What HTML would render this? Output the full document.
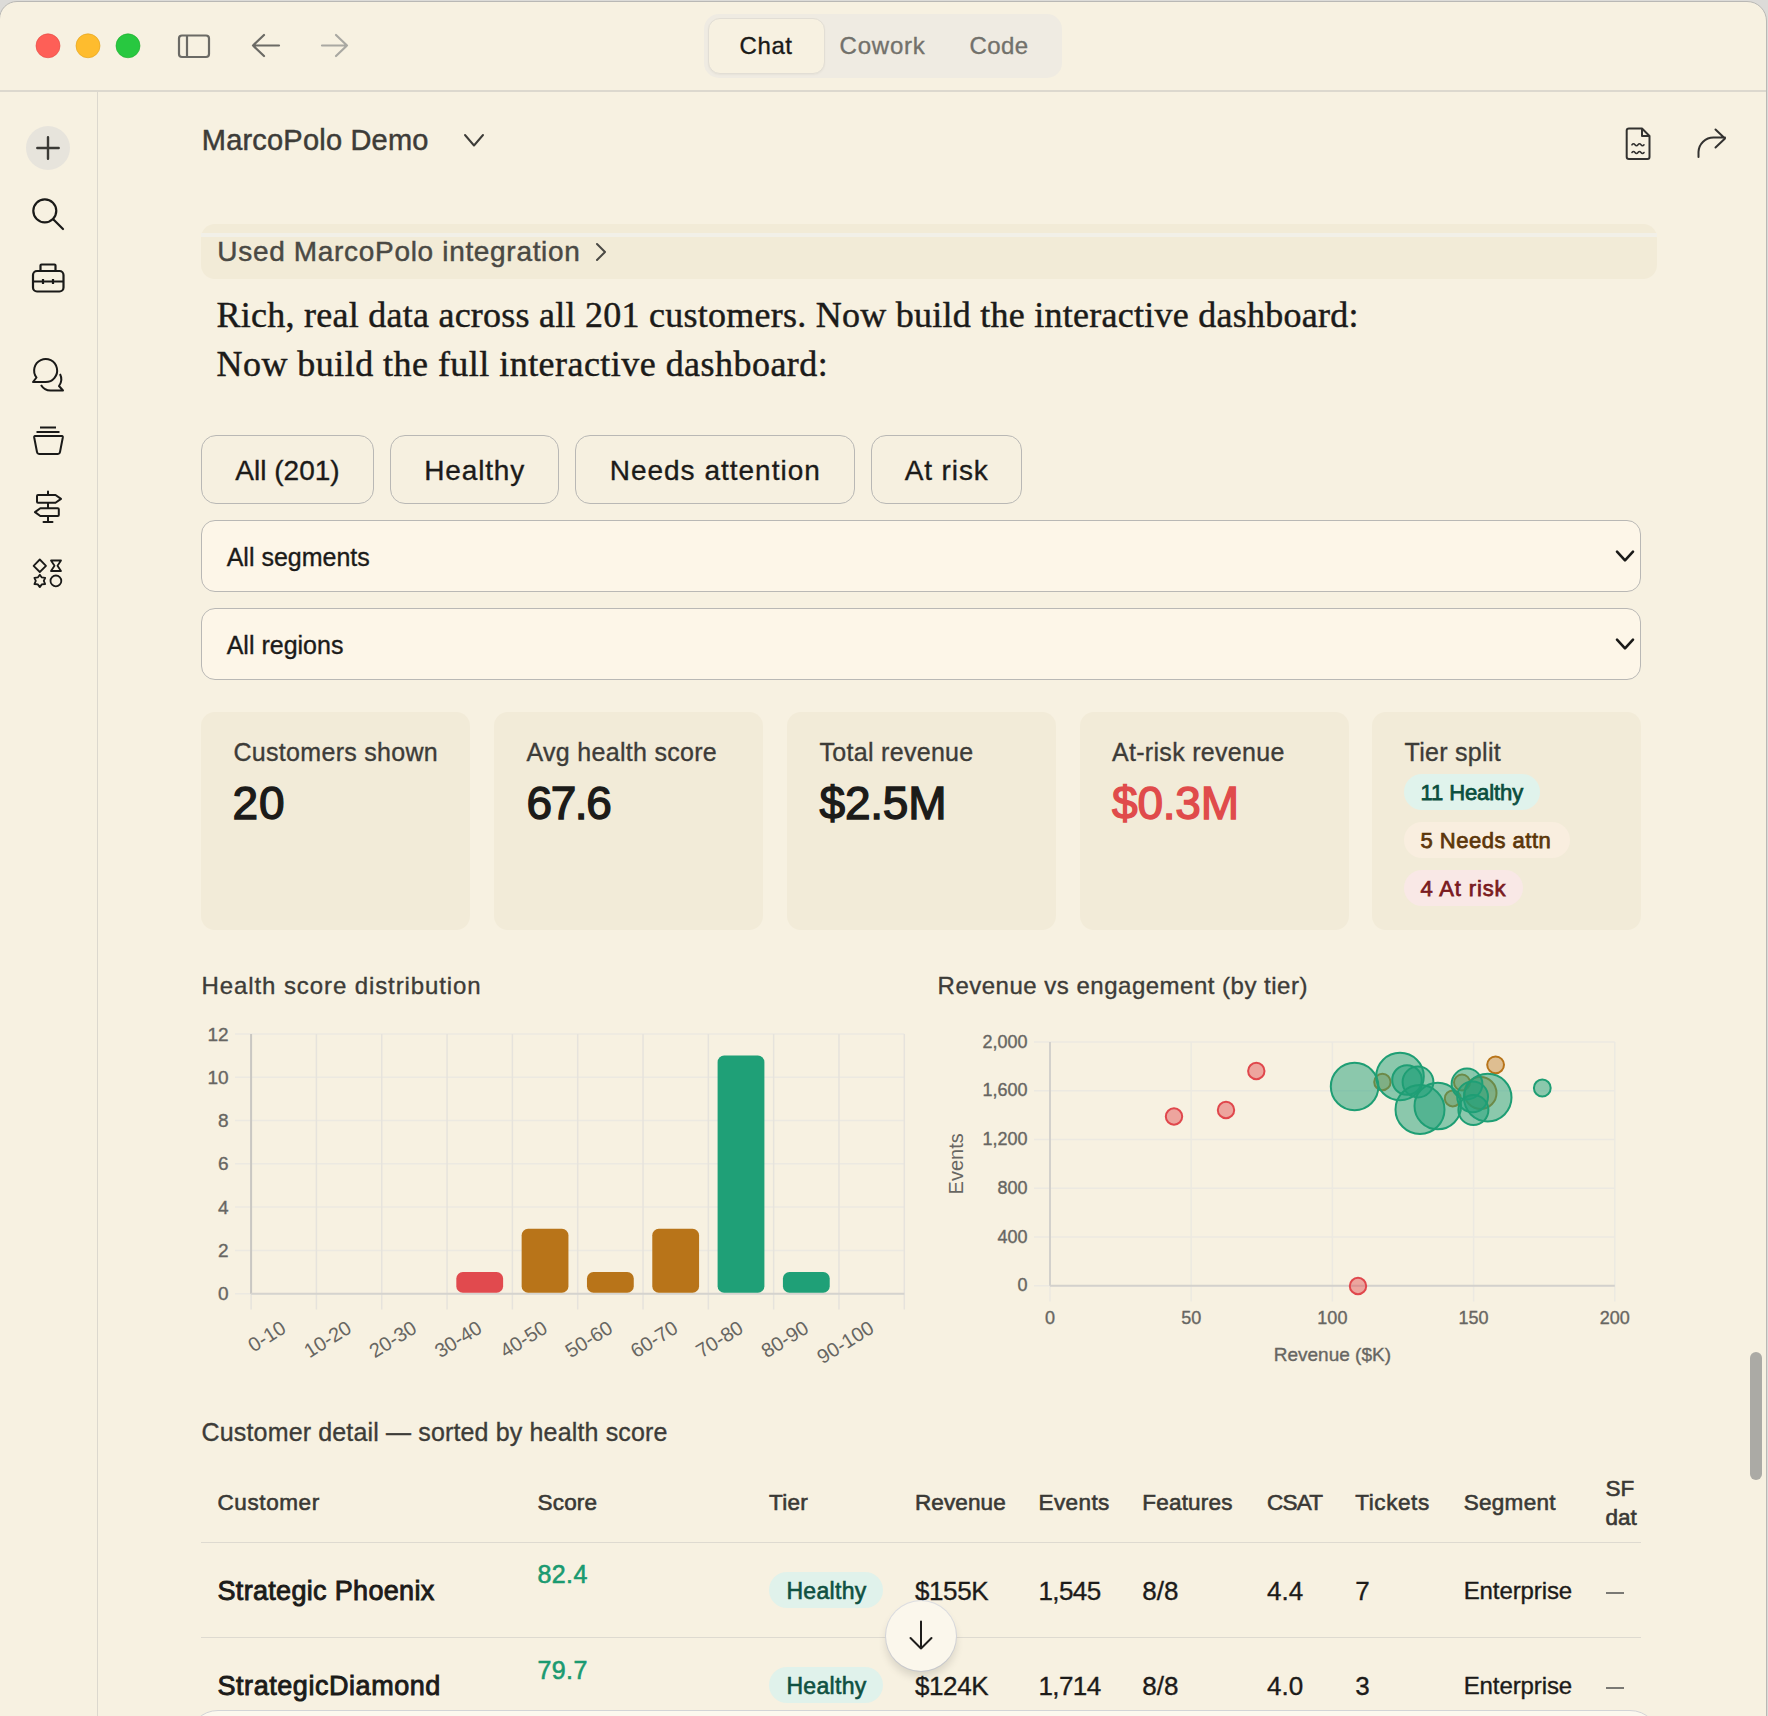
<!DOCTYPE html>
<html><head><meta charset="utf-8"><style>
html,body{margin:0;padding:0;}
body{width:1768px;height:1716px;overflow:hidden;position:relative;background:#DCDBD8;font-family:'Liberation Sans', sans-serif;}
</style></head><body>
<div style="position:absolute;left:-1px;top:0.5px;width:1768px;height:1720px;box-sizing:border-box;background:#F7F1E1;border-radius:18px 20px 0 0;border:1px solid #B9B8B5;"></div>
<div style="position:absolute;left:0px;top:90px;width:1766px;height:2px;box-sizing:border-box;background:#DCD8CE;"></div>
<div style="position:absolute;left:97px;top:92px;width:1px;height:1624px;box-sizing:border-box;background:#DCD8CE;"></div>
<div style="position:absolute;left:704px;top:14px;width:358px;height:64px;box-sizing:border-box;background:#EFEBE2;border-radius:15px;"></div>
<div style="position:absolute;left:708px;top:18px;width:117px;height:56px;box-sizing:border-box;background:#F7F1E1;border-radius:12px;border:1px solid #E2DED5;box-shadow:0 1px 2px rgba(0,0,0,0.04);"></div>
<div style="position:absolute;left:739.50px;top:30.18px;font:400 24px/31px 'Liberation Sans', sans-serif;color:#1A1A18;white-space:nowrap;letter-spacing:0.6px;-webkit-text-stroke:0.35px #1A1A18;">Chat</div>
<div style="position:absolute;left:839.50px;top:30.18px;font:400 24px/31px 'Liberation Sans', sans-serif;color:#72716B;white-space:nowrap;letter-spacing:0.8px;-webkit-text-stroke:0.35px #72716B;">Cowork</div>
<div style="position:absolute;left:969.50px;top:30.18px;font:400 24px/31px 'Liberation Sans', sans-serif;color:#72716B;white-space:nowrap;letter-spacing:0.4px;-webkit-text-stroke:0.35px #72716B;">Code</div>
<div style="position:absolute;left:201.80px;top:121.25px;font:400 29px/38px 'Liberation Sans', sans-serif;color:#3D3C38;white-space:nowrap;letter-spacing:0.2px;-webkit-text-stroke:0.5px #3D3C38;">MarcoPolo Demo</div>
<div style="position:absolute;left:201px;top:224px;width:1456px;height:55px;box-sizing:border-box;background:#F2EBD7;border-radius:14px;"></div>
<div style="position:absolute;left:201px;top:233px;width:1455.5px;height:4px;box-sizing:border-box;background:#F2F0E8;"></div>
<div style="position:absolute;left:217.30px;top:234.30px;font:400 28px/36px 'Liberation Sans', sans-serif;color:#4A4944;white-space:nowrap;letter-spacing:0.68px;-webkit-text-stroke:0.45px #4A4944;">Used MarcoPolo integration</div>
<div style="position:absolute;left:216.50px;top:292.35px;font:400 36px/47px 'Liberation Serif', serif;color:#1C1B19;white-space:nowrap;letter-spacing:0.25px;-webkit-text-stroke:0.45px #1C1B19;">Rich, real data across all 201 customers. Now build the interactive dashboard:</div>
<div style="position:absolute;left:216.50px;top:340.85px;font:400 36px/47px 'Liberation Serif', serif;color:#1C1B19;white-space:nowrap;letter-spacing:0.46px;-webkit-text-stroke:0.45px #1C1B19;">Now build the full interactive dashboard:</div>
<div style="position:absolute;left:201px;top:435px;width:173px;height:68.5px;box-sizing:border-box;border:1.3px solid #B9B8B5;border-radius:15px;background:#F6F0E0;"></div>
<div style="position:absolute;left:-112.50px;width:800px;text-align:center;top:452.80px;font:400 28px/36px 'Liberation Sans', sans-serif;color:#1C1B19;white-space:nowrap;-webkit-text-stroke:0.35px #1C1B19;">All (201)</div>
<div style="position:absolute;left:390px;top:435px;width:168.5px;height:68.5px;box-sizing:border-box;border:1.3px solid #B9B8B5;border-radius:15px;background:#F6F0E0;"></div>
<div style="position:absolute;left:74.68px;width:800px;text-align:center;top:452.80px;font:400 28px/36px 'Liberation Sans', sans-serif;color:#1C1B19;white-space:nowrap;letter-spacing:0.85px;-webkit-text-stroke:0.35px #1C1B19;">Healthy</div>
<div style="position:absolute;left:575px;top:435px;width:279.5px;height:68.5px;box-sizing:border-box;border:1.3px solid #B9B8B5;border-radius:15px;background:#F6F0E0;"></div>
<div style="position:absolute;left:315.25px;width:800px;text-align:center;top:452.80px;font:400 28px/36px 'Liberation Sans', sans-serif;color:#1C1B19;white-space:nowrap;letter-spacing:1.0px;-webkit-text-stroke:0.35px #1C1B19;">Needs attention</div>
<div style="position:absolute;left:871px;top:435px;width:150.5px;height:68.5px;box-sizing:border-box;border:1.3px solid #B9B8B5;border-radius:15px;background:#F6F0E0;"></div>
<div style="position:absolute;left:546.70px;width:800px;text-align:center;top:452.80px;font:400 28px/36px 'Liberation Sans', sans-serif;color:#1C1B19;white-space:nowrap;letter-spacing:0.9px;-webkit-text-stroke:0.35px #1C1B19;">At risk</div>
<div style="position:absolute;left:201px;top:520px;width:1440px;height:71.5px;box-sizing:border-box;border:1.3px solid #B9B8B5;border-radius:14px;background:#FDF6E8;"></div>
<div style="position:absolute;left:226.70px;top:540.64px;font:400 25px/32px 'Liberation Sans', sans-serif;color:#1C1B19;white-space:nowrap;-webkit-text-stroke:0.35px #1C1B19;">All segments</div>
<div style="position:absolute;left:201px;top:608px;width:1440px;height:71.5px;box-sizing:border-box;border:1.3px solid #B9B8B5;border-radius:14px;background:#FDF6E8;"></div>
<div style="position:absolute;left:226.70px;top:628.64px;font:400 25px/32px 'Liberation Sans', sans-serif;color:#1C1B19;white-space:nowrap;-webkit-text-stroke:0.35px #1C1B19;">All regions</div>
<div style="position:absolute;left:201px;top:712px;width:269px;height:217.5px;box-sizing:border-box;background:#F2EBD8;border-radius:14px;"></div>
<div style="position:absolute;left:233.50px;top:735.84px;font:400 25px/32px 'Liberation Sans', sans-serif;color:#3D3C38;white-space:nowrap;letter-spacing:0.3px;-webkit-text-stroke:0.35px #3D3C38;">Customers shown</div>
<div style="position:absolute;left:232.50px;top:772.56px;font:400 46px/60px 'Liberation Sans', sans-serif;color:#1C1B19;white-space:nowrap;letter-spacing:0.8px;-webkit-text-stroke:1.4px #1C1B19;">20</div>
<div style="position:absolute;left:494px;top:712px;width:269px;height:217.5px;box-sizing:border-box;background:#F2EBD8;border-radius:14px;"></div>
<div style="position:absolute;left:526.50px;top:735.84px;font:400 25px/32px 'Liberation Sans', sans-serif;color:#3D3C38;white-space:nowrap;letter-spacing:0.3px;-webkit-text-stroke:0.35px #3D3C38;">Avg health score</div>
<div style="position:absolute;left:526.50px;top:772.56px;font:400 46px/60px 'Liberation Sans', sans-serif;color:#1C1B19;white-space:nowrap;letter-spacing:-1.4px;-webkit-text-stroke:1.4px #1C1B19;">67.6</div>
<div style="position:absolute;left:787px;top:712px;width:269px;height:217.5px;box-sizing:border-box;background:#F2EBD8;border-radius:14px;"></div>
<div style="position:absolute;left:819.50px;top:735.84px;font:400 25px/32px 'Liberation Sans', sans-serif;color:#3D3C38;white-space:nowrap;letter-spacing:0.3px;-webkit-text-stroke:0.35px #3D3C38;">Total revenue</div>
<div style="position:absolute;left:819.50px;top:772.56px;font:400 46px/60px 'Liberation Sans', sans-serif;color:#1C1B19;white-space:nowrap;letter-spacing:-0.2px;-webkit-text-stroke:1.4px #1C1B19;">$2.5M</div>
<div style="position:absolute;left:1079.5px;top:712px;width:269px;height:217.5px;box-sizing:border-box;background:#F2EBD8;border-radius:14px;"></div>
<div style="position:absolute;left:1112.00px;top:735.84px;font:400 25px/32px 'Liberation Sans', sans-serif;color:#3D3C38;white-space:nowrap;letter-spacing:0.3px;-webkit-text-stroke:0.35px #3D3C38;">At-risk revenue</div>
<div style="position:absolute;left:1112.00px;top:772.56px;font:400 46px/60px 'Liberation Sans', sans-serif;color:#E04B4B;white-space:nowrap;letter-spacing:-0.2px;-webkit-text-stroke:1.4px #E04B4B;">$0.3M</div>
<div style="position:absolute;left:1372px;top:712px;width:269px;height:217.5px;box-sizing:border-box;background:#F2EBD8;border-radius:14px;"></div>
<div style="position:absolute;left:1404.50px;top:735.84px;font:400 25px/32px 'Liberation Sans', sans-serif;color:#3D3C38;white-space:nowrap;letter-spacing:0.3px;-webkit-text-stroke:0.35px #3D3C38;">Tier split</div>
<div style="position:absolute;left:1404px;top:774px;width:136px;height:36px;box-sizing:border-box;background:#E0F3EC;border-radius:18px;"></div>
<div style="position:absolute;left:1420.50px;top:778.18px;font:400 22px/29px 'Liberation Sans', sans-serif;color:#0B4F3E;white-space:nowrap;letter-spacing:-0.1px;-webkit-text-stroke:0.75px #0B4F3E;">11 Healthy</div>
<div style="position:absolute;left:1404px;top:822px;width:166px;height:36px;box-sizing:border-box;background:#F9EEDF;border-radius:18px;"></div>
<div style="position:absolute;left:1420.50px;top:826.18px;font:400 22px/29px 'Liberation Sans', sans-serif;color:#5C360A;white-space:nowrap;letter-spacing:0.5px;-webkit-text-stroke:0.75px #5C360A;">5 Needs attn</div>
<div style="position:absolute;left:1404px;top:870px;width:118.5px;height:36px;box-sizing:border-box;background:#F9E8E6;border-radius:18px;"></div>
<div style="position:absolute;left:1420.50px;top:874.18px;font:400 22px/29px 'Liberation Sans', sans-serif;color:#7A1B1F;white-space:nowrap;letter-spacing:0.85px;-webkit-text-stroke:0.75px #7A1B1F;">4 At risk</div>
<div style="position:absolute;left:201.60px;top:970.18px;font:400 24px/31px 'Liberation Sans', sans-serif;color:#3D3C38;white-space:nowrap;letter-spacing:0.9px;-webkit-text-stroke:0.35px #3D3C38;">Health score distribution</div>
<div style="position:absolute;right:1539.40px;top:1281.32px;font:400 19px/25px 'Liberation Sans', sans-serif;color:#676662;white-space:nowrap;-webkit-text-stroke:0.35px #676662;">0</div>
<div style="position:absolute;right:1539.40px;top:1238.02px;font:400 19px/25px 'Liberation Sans', sans-serif;color:#676662;white-space:nowrap;-webkit-text-stroke:0.35px #676662;">2</div>
<div style="position:absolute;right:1539.40px;top:1194.72px;font:400 19px/25px 'Liberation Sans', sans-serif;color:#676662;white-space:nowrap;-webkit-text-stroke:0.35px #676662;">4</div>
<div style="position:absolute;right:1539.40px;top:1151.42px;font:400 19px/25px 'Liberation Sans', sans-serif;color:#676662;white-space:nowrap;-webkit-text-stroke:0.35px #676662;">6</div>
<div style="position:absolute;right:1539.40px;top:1108.12px;font:400 19px/25px 'Liberation Sans', sans-serif;color:#676662;white-space:nowrap;-webkit-text-stroke:0.35px #676662;">8</div>
<div style="position:absolute;right:1539.40px;top:1064.82px;font:400 19px/25px 'Liberation Sans', sans-serif;color:#676662;white-space:nowrap;-webkit-text-stroke:0.35px #676662;">10</div>
<div style="position:absolute;right:1539.40px;top:1021.52px;font:400 19px/25px 'Liberation Sans', sans-serif;color:#676662;white-space:nowrap;-webkit-text-stroke:0.35px #676662;">12</div>
<div style="position:absolute;left:937.60px;top:970.18px;font:400 24px/31px 'Liberation Sans', sans-serif;color:#3D3C38;white-space:nowrap;letter-spacing:0.5px;-webkit-text-stroke:0.35px #3D3C38;">Revenue vs engagement (by tier)</div>
<div style="position:absolute;right:740.40px;top:1274.46px;font:400 18px/23px 'Liberation Sans', sans-serif;color:#676662;white-space:nowrap;-webkit-text-stroke:0.35px #676662;">0</div>
<div style="position:absolute;right:740.40px;top:1225.70px;font:400 18px/23px 'Liberation Sans', sans-serif;color:#676662;white-space:nowrap;-webkit-text-stroke:0.35px #676662;">400</div>
<div style="position:absolute;right:740.40px;top:1176.94px;font:400 18px/23px 'Liberation Sans', sans-serif;color:#676662;white-space:nowrap;-webkit-text-stroke:0.35px #676662;">800</div>
<div style="position:absolute;right:740.40px;top:1128.18px;font:400 18px/23px 'Liberation Sans', sans-serif;color:#676662;white-space:nowrap;-webkit-text-stroke:0.35px #676662;">1,200</div>
<div style="position:absolute;right:740.40px;top:1079.42px;font:400 18px/23px 'Liberation Sans', sans-serif;color:#676662;white-space:nowrap;-webkit-text-stroke:0.35px #676662;">1,600</div>
<div style="position:absolute;right:740.40px;top:1030.66px;font:400 18px/23px 'Liberation Sans', sans-serif;color:#676662;white-space:nowrap;-webkit-text-stroke:0.35px #676662;">2,000</div>
<div style="position:absolute;left:650.00px;width:800px;text-align:center;top:1307.26px;font:400 18px/23px 'Liberation Sans', sans-serif;color:#676662;white-space:nowrap;-webkit-text-stroke:0.35px #676662;">0</div>
<div style="position:absolute;left:791.20px;width:800px;text-align:center;top:1307.26px;font:400 18px/23px 'Liberation Sans', sans-serif;color:#676662;white-space:nowrap;-webkit-text-stroke:0.35px #676662;">50</div>
<div style="position:absolute;left:932.40px;width:800px;text-align:center;top:1307.26px;font:400 18px/23px 'Liberation Sans', sans-serif;color:#676662;white-space:nowrap;-webkit-text-stroke:0.35px #676662;">100</div>
<div style="position:absolute;left:1073.60px;width:800px;text-align:center;top:1307.26px;font:400 18px/23px 'Liberation Sans', sans-serif;color:#676662;white-space:nowrap;-webkit-text-stroke:0.35px #676662;">150</div>
<div style="position:absolute;left:1214.80px;width:800px;text-align:center;top:1307.26px;font:400 18px/23px 'Liberation Sans', sans-serif;color:#676662;white-space:nowrap;-webkit-text-stroke:0.35px #676662;">200</div>
<div style="position:absolute;left:932.40px;width:800px;text-align:center;top:1342.42px;font:400 19px/25px 'Liberation Sans', sans-serif;color:#676662;white-space:nowrap;-webkit-text-stroke:0.35px #676662;">Revenue ($K)</div>
<div style="position:absolute;left:201.60px;top:1416.04px;font:400 25px/32px 'Liberation Sans', sans-serif;color:#3D3C38;white-space:nowrap;letter-spacing:0.15px;-webkit-text-stroke:0.35px #3D3C38;">Customer detail — sorted by health score</div>
<div style="position:absolute;left:217.50px;top:1488.20px;font:400 22.5px/29px 'Liberation Sans', sans-serif;color:#3A3935;white-space:nowrap;letter-spacing:0.6px;-webkit-text-stroke:0.6px #3A3935;">Customer</div>
<div style="position:absolute;left:537.50px;top:1488.20px;font:400 22.5px/29px 'Liberation Sans', sans-serif;color:#3A3935;white-space:nowrap;letter-spacing:0.2px;-webkit-text-stroke:0.6px #3A3935;">Score</div>
<div style="position:absolute;left:769.00px;top:1488.20px;font:400 22.5px/29px 'Liberation Sans', sans-serif;color:#3A3935;white-space:nowrap;letter-spacing:0.3px;-webkit-text-stroke:0.6px #3A3935;">Tier</div>
<div style="position:absolute;left:915.00px;top:1488.20px;font:400 22.5px/29px 'Liberation Sans', sans-serif;color:#3A3935;white-space:nowrap;letter-spacing:0.1px;-webkit-text-stroke:0.6px #3A3935;">Revenue</div>
<div style="position:absolute;left:1038.50px;top:1488.20px;font:400 22.5px/29px 'Liberation Sans', sans-serif;color:#3A3935;white-space:nowrap;letter-spacing:0.4px;-webkit-text-stroke:0.6px #3A3935;">Events</div>
<div style="position:absolute;left:1142.30px;top:1488.20px;font:400 22.5px/29px 'Liberation Sans', sans-serif;color:#3A3935;white-space:nowrap;letter-spacing:0.2px;-webkit-text-stroke:0.6px #3A3935;">Features</div>
<div style="position:absolute;left:1267.00px;top:1488.20px;font:400 22.5px/29px 'Liberation Sans', sans-serif;color:#3A3935;white-space:nowrap;letter-spacing:-0.8px;-webkit-text-stroke:0.6px #3A3935;">CSAT</div>
<div style="position:absolute;left:1355.20px;top:1488.20px;font:400 22.5px/29px 'Liberation Sans', sans-serif;color:#3A3935;white-space:nowrap;letter-spacing:0.6px;-webkit-text-stroke:0.6px #3A3935;">Tickets</div>
<div style="position:absolute;left:1463.70px;top:1488.20px;font:400 22.5px/29px 'Liberation Sans', sans-serif;color:#3A3935;white-space:nowrap;letter-spacing:0.3px;-webkit-text-stroke:0.6px #3A3935;">Segment</div>
<div style="position:absolute;left:1605.50px;top:1474.40px;font:400 22.5px/29px 'Liberation Sans', sans-serif;color:#3A3935;white-space:nowrap;-webkit-text-stroke:0.6px #3A3935;">SF</div>
<div style="position:absolute;left:1605.50px;top:1503.00px;font:400 22.5px/29px 'Liberation Sans', sans-serif;color:#3A3935;white-space:nowrap;-webkit-text-stroke:0.6px #3A3935;">dat</div>
<div style="position:absolute;left:201px;top:1541.5px;width:1440px;height:1.5px;box-sizing:border-box;background:#DEDAD0;"></div>
<div style="position:absolute;left:201px;top:1636.5px;width:1440px;height:1.5px;box-sizing:border-box;background:#DEDAD0;"></div>
<div style="position:absolute;left:217.50px;top:1573.64px;font:400 27px/35px 'Liberation Sans', sans-serif;color:#1C1B19;white-space:nowrap;letter-spacing:0.32px;-webkit-text-stroke:0.9px #1C1B19;">Strategic Phoenix</div>
<div style="position:absolute;left:537.50px;top:1558.34px;font:400 25px/32px 'Liberation Sans', sans-serif;color:#1A9A70;white-space:nowrap;letter-spacing:0.4px;-webkit-text-stroke:0.6px #1A9A70;">82.4</div>
<div style="position:absolute;left:769px;top:1572px;width:113.5px;height:36px;box-sizing:border-box;background:#E0F2EB;border-radius:18px;"></div>
<div style="position:absolute;left:426.50px;width:800px;text-align:center;top:1575.53px;font:400 23px/30px 'Liberation Sans', sans-serif;color:#0F5142;white-space:nowrap;letter-spacing:0.3px;-webkit-text-stroke:0.6px #0F5142;">Healthy</div>
<div style="position:absolute;left:915.00px;top:1574.49px;font:400 26px/34px 'Liberation Sans', sans-serif;color:#1C1B19;white-space:nowrap;letter-spacing:-0.4px;-webkit-text-stroke:0.35px #1C1B19;">$155K</div>
<div style="position:absolute;left:1038.50px;top:1574.49px;font:400 26px/34px 'Liberation Sans', sans-serif;color:#1C1B19;white-space:nowrap;letter-spacing:-0.6px;-webkit-text-stroke:0.35px #1C1B19;">1,545</div>
<div style="position:absolute;left:1142.30px;top:1574.49px;font:400 26px/34px 'Liberation Sans', sans-serif;color:#1C1B19;white-space:nowrap;-webkit-text-stroke:0.35px #1C1B19;">8/8</div>
<div style="position:absolute;left:1267.00px;top:1574.49px;font:400 26px/34px 'Liberation Sans', sans-serif;color:#1C1B19;white-space:nowrap;-webkit-text-stroke:0.35px #1C1B19;">4.4</div>
<div style="position:absolute;left:1355.20px;top:1574.49px;font:400 26px/34px 'Liberation Sans', sans-serif;color:#1C1B19;white-space:nowrap;-webkit-text-stroke:0.35px #1C1B19;">7</div>
<div style="position:absolute;left:1463.70px;top:1575.18px;font:400 24px/31px 'Liberation Sans', sans-serif;color:#1C1B19;white-space:nowrap;letter-spacing:-0.1px;-webkit-text-stroke:0.35px #1C1B19;">Enterprise</div>
<div style="position:absolute;left:1605.5px;top:1591.5px;width:18.5px;height:2px;box-sizing:border-box;background:#7A7974;"></div>
<div style="position:absolute;left:217.50px;top:1668.64px;font:400 27px/35px 'Liberation Sans', sans-serif;color:#1C1B19;white-space:nowrap;letter-spacing:0.55px;-webkit-text-stroke:0.9px #1C1B19;">StrategicDiamond</div>
<div style="position:absolute;left:537.50px;top:1653.84px;font:400 25px/32px 'Liberation Sans', sans-serif;color:#1A9A70;white-space:nowrap;letter-spacing:0.4px;-webkit-text-stroke:0.6px #1A9A70;">79.7</div>
<div style="position:absolute;left:769px;top:1667px;width:113.5px;height:36px;box-sizing:border-box;background:#E0F2EB;border-radius:18px;"></div>
<div style="position:absolute;left:426.50px;width:800px;text-align:center;top:1670.53px;font:400 23px/30px 'Liberation Sans', sans-serif;color:#0F5142;white-space:nowrap;letter-spacing:0.3px;-webkit-text-stroke:0.6px #0F5142;">Healthy</div>
<div style="position:absolute;left:915.00px;top:1669.49px;font:400 26px/34px 'Liberation Sans', sans-serif;color:#1C1B19;white-space:nowrap;letter-spacing:-0.4px;-webkit-text-stroke:0.35px #1C1B19;">$124K</div>
<div style="position:absolute;left:1038.50px;top:1669.49px;font:400 26px/34px 'Liberation Sans', sans-serif;color:#1C1B19;white-space:nowrap;letter-spacing:-0.6px;-webkit-text-stroke:0.35px #1C1B19;">1,714</div>
<div style="position:absolute;left:1142.30px;top:1669.49px;font:400 26px/34px 'Liberation Sans', sans-serif;color:#1C1B19;white-space:nowrap;-webkit-text-stroke:0.35px #1C1B19;">8/8</div>
<div style="position:absolute;left:1267.00px;top:1669.49px;font:400 26px/34px 'Liberation Sans', sans-serif;color:#1C1B19;white-space:nowrap;-webkit-text-stroke:0.35px #1C1B19;">4.0</div>
<div style="position:absolute;left:1355.20px;top:1669.49px;font:400 26px/34px 'Liberation Sans', sans-serif;color:#1C1B19;white-space:nowrap;-webkit-text-stroke:0.35px #1C1B19;">3</div>
<div style="position:absolute;left:1463.70px;top:1670.18px;font:400 24px/31px 'Liberation Sans', sans-serif;color:#1C1B19;white-space:nowrap;letter-spacing:-0.1px;-webkit-text-stroke:0.35px #1C1B19;">Enterprise</div>
<div style="position:absolute;left:1605.5px;top:1686.5px;width:18.5px;height:2px;box-sizing:border-box;background:#7A7974;"></div>
<div style="position:absolute;left:188px;top:1709.5px;width:1472px;height:80px;box-sizing:border-box;border:1.5px solid #D3D4D6;border-radius:30px;background:#FCF8EE;"></div>
<div style="position:absolute;left:1750px;top:1352px;width:12px;height:128px;box-sizing:border-box;background:#ABAAA5;border-radius:6px;"></div>
<svg style="position:absolute;left:0;top:0" width="1768" height="1716" viewBox="0 0 1768 1716">
<circle cx="48" cy="45.8" r="12" fill="#FE5F57" stroke="#E2463F" stroke-width="0.6"/>
<circle cx="88" cy="45.8" r="12" fill="#FEBC2E" stroke="#E1A014" stroke-width="0.6"/>
<circle cx="128" cy="45.8" r="12" fill="#28C840" stroke="#1AAB29" stroke-width="0.6"/>
<rect x="179" y="35.5" width="30" height="21.5" rx="3" fill="none" stroke="#6B6A65" stroke-width="2.2"/>
<line x1="187" y1="36" x2="187" y2="56.5" stroke="#6B6A65" stroke-width="2.2"/>
<path d="M279 45.5 H253 M264 35 L253 45.5 L264 56" fill="none" stroke="#6B6A65" stroke-width="2.2" stroke-linecap="round" stroke-linejoin="round"/>
<path d="M322 45.5 H347 M336 35 L347 45.5 L336 56" fill="none" stroke="#A9A8A2" stroke-width="2.2" stroke-linecap="round" stroke-linejoin="round"/>
<circle cx="48" cy="148" r="22" fill="#E7E4DC"/>
<path d="M48 137.3 V158.7 M37.3 148 H58.7" stroke="#3A3935" stroke-width="2.4" stroke-linecap="round"/>
<circle cx="44.8" cy="210.8" r="11.5" fill="none" stroke="#1A1A18" stroke-width="2.2"/>
<path d="M53.5 219.5 L63 229" stroke="#1A1A18" stroke-width="2.2" stroke-linecap="round"/>
<rect x="33" y="271" width="30.5" height="20.5" rx="4" fill="none" stroke="#1A1A18" stroke-width="2.2"/>
<path d="M40.5 271 V265.5 Q40.5 264.5 41.5 264.5 H54.5 Q55.5 264.5 55.5 265.5 V271" fill="none" stroke="#1A1A18" stroke-width="2.2"/>
<path d="M33 281.5 H63.5 M43 279 V284 M53 279 V284" fill="none" stroke="#1A1A18" stroke-width="2.2"/>
<path d="M33 382 L36.5 377.5 A11.5 11.5 0 1 1 45.5 382 Z" fill="none" stroke="#1A1A18" stroke-width="2" stroke-linejoin="round"/>
<path d="M41 385 A11.5 11.5 0 0 0 52 390.5 H63 L59 386 A11.5 11.5 0 0 0 60 374" fill="none" stroke="#1A1A18" stroke-width="2" stroke-linejoin="round"/>
<path d="M40 427.5 H56 M36.5 432 H59.5" stroke="#1A1A18" stroke-width="2" />
<path d="M35 436 H62 Q63 436 62.8 437.5 L60 452 Q59.6 454 58 454 H39 Q37.4 454 37 452 L34.2 437.5 Q34 436 35 436 Z" fill="none" stroke="#1A1A18" stroke-width="2" stroke-linejoin="round"/>
<path d="M48 491.5 V495 M48 503 V508 M48 516 V522 M43.5 522 H52.5" stroke="#1A1A18" stroke-width="2" stroke-linecap="round"/>
<path d="M38 495 H55.5 L61 498.9 L55.5 502.8 H38 Q37 502.8 37 501.8 V496 Q37 495 38 495 Z" fill="none" stroke="#1A1A18" stroke-width="2" stroke-linejoin="round"/>
<path d="M40.3 508.2 H57.8 Q58.8 508.2 58.8 509.2 V515 Q58.8 516 57.8 516 H40.3 L35 512.1 Z" fill="none" stroke="#1A1A18" stroke-width="2" stroke-linejoin="round"/>
<path d="M39.8 559.5 L46 565.8 L39.8 572 L33.6 565.8 Z" fill="none" stroke="#1A1A18" stroke-width="1.8" stroke-linejoin="round"/>
<path d="M51 560.5 H61 L57.5 565.8 L61 571 H51 L54.5 565.8 Z" fill="none" stroke="#1A1A18" stroke-width="1.8" stroke-linejoin="round"/>
<polygon points="39.80,574.70 41.80,577.44 45.17,577.80 43.80,580.90 45.17,584.00 41.80,584.36 39.80,587.10 37.80,584.36 34.43,584.00 35.80,580.90 34.43,577.80 37.80,577.44" fill="none" stroke="#1A1A18" stroke-width="1.8" stroke-linejoin="round"/>
<circle cx="55.9" cy="580.9" r="5.4" fill="none" stroke="#1A1A18" stroke-width="1.8"/>
<path d="M465 135 L474 145.5 L483 135" fill="none" stroke="#3D3C38" stroke-width="2" stroke-linecap="round" stroke-linejoin="round"/>
<path d="M1629 128.5 H1642 L1649.5 136 V157 Q1649.5 159 1647.5 159 H1629 Q1626.7 159 1626.7 157 V130.5 Q1626.7 128.5 1629 128.5 Z M1642 128.5 V136 H1649.5" fill="none" stroke="#333230" stroke-width="2" stroke-linejoin="round"/>
<path d="M1632 144.8 q1.5 -2 3 0 t3 0 t3 0 t3 0 M1632 152.5 q1.5 -2 3 0 t3 0 t3 0 t3 0" fill="none" stroke="#333230" stroke-width="1.6" stroke-linecap="round"/>
<path d="M1698.5 157 V152 A15 15 0 0 1 1713.5 137.5 H1725 M1715.5 129.5 L1725 138.5 L1715.5 147.5" fill="none" stroke="#333230" stroke-width="2" stroke-linecap="round" stroke-linejoin="round"/>
<path d="M597 244 L605 252 L597 260" fill="none" stroke="#4A4944" stroke-width="2" stroke-linecap="round" stroke-linejoin="round"/>
<path d="M1617 551.7 L1625 560.3 L1633 551.7" fill="none" stroke="#1A1A18" stroke-width="2.6" stroke-linecap="round" stroke-linejoin="round"/>
<path d="M1617 639.7 L1625 648.3 L1633 639.7" fill="none" stroke="#1A1A18" stroke-width="2.6" stroke-linecap="round" stroke-linejoin="round"/>
<line x1="235" y1="1293.70" x2="904.3" y2="1293.70" stroke="#ECE9E1" stroke-width="1.5"/>
<line x1="235" y1="1250.40" x2="904.3" y2="1250.40" stroke="#ECE9E1" stroke-width="1.5"/>
<line x1="235" y1="1207.10" x2="904.3" y2="1207.10" stroke="#ECE9E1" stroke-width="1.5"/>
<line x1="235" y1="1163.80" x2="904.3" y2="1163.80" stroke="#ECE9E1" stroke-width="1.5"/>
<line x1="235" y1="1120.50" x2="904.3" y2="1120.50" stroke="#ECE9E1" stroke-width="1.5"/>
<line x1="235" y1="1077.20" x2="904.3" y2="1077.20" stroke="#ECE9E1" stroke-width="1.5"/>
<line x1="235" y1="1033.90" x2="904.3" y2="1033.90" stroke="#ECE9E1" stroke-width="1.5"/>
<line x1="251.10" y1="1033.9" x2="251.10" y2="1309.5" stroke="#E6E3DC" stroke-width="1.5"/>
<line x1="316.42" y1="1033.9" x2="316.42" y2="1309.5" stroke="#E6E3DC" stroke-width="1.5"/>
<line x1="381.74" y1="1033.9" x2="381.74" y2="1309.5" stroke="#E6E3DC" stroke-width="1.5"/>
<line x1="447.06" y1="1033.9" x2="447.06" y2="1309.5" stroke="#E6E3DC" stroke-width="1.5"/>
<line x1="512.38" y1="1033.9" x2="512.38" y2="1309.5" stroke="#E6E3DC" stroke-width="1.5"/>
<line x1="577.70" y1="1033.9" x2="577.70" y2="1309.5" stroke="#E6E3DC" stroke-width="1.5"/>
<line x1="643.02" y1="1033.9" x2="643.02" y2="1309.5" stroke="#E6E3DC" stroke-width="1.5"/>
<line x1="708.34" y1="1033.9" x2="708.34" y2="1309.5" stroke="#E6E3DC" stroke-width="1.5"/>
<line x1="773.66" y1="1033.9" x2="773.66" y2="1309.5" stroke="#E6E3DC" stroke-width="1.5"/>
<line x1="838.98" y1="1033.9" x2="838.98" y2="1309.5" stroke="#E6E3DC" stroke-width="1.5"/>
<line x1="904.30" y1="1033.9" x2="904.30" y2="1309.5" stroke="#E6E3DC" stroke-width="1.5"/>
<line x1="251.1" y1="1033.9" x2="251.1" y2="1293.7" stroke="#C9C7C2" stroke-width="2"/>
<line x1="251.1" y1="1293.7" x2="904.3" y2="1293.7" stroke="#D5D3CE" stroke-width="2"/>
<rect x="456.32" y="1272.05" width="46.8" height="20.65" rx="6.5" fill="#E14A4E"/>
<rect x="521.64" y="1228.75" width="46.8" height="63.95" rx="6.5" fill="#B87419"/>
<rect x="586.96" y="1272.05" width="46.8" height="20.65" rx="6.5" fill="#B87419"/>
<rect x="652.28" y="1228.75" width="46.8" height="63.95" rx="6.5" fill="#B87419"/>
<rect x="717.60" y="1055.55" width="46.8" height="237.15" rx="6.5" fill="#1FA077"/>
<rect x="782.92" y="1272.05" width="46.8" height="20.65" rx="6.5" fill="#1FA077"/>
<text x="284.76" y="1327" transform="rotate(-32 284.76 1327)" text-anchor="end" dominant-baseline="middle" font-family="Liberation Sans" font-size="20" fill="#676662">0-10</text>
<text x="350.08" y="1327" transform="rotate(-32 350.08 1327)" text-anchor="end" dominant-baseline="middle" font-family="Liberation Sans" font-size="20" fill="#676662">10-20</text>
<text x="415.40" y="1327" transform="rotate(-32 415.40 1327)" text-anchor="end" dominant-baseline="middle" font-family="Liberation Sans" font-size="20" fill="#676662">20-30</text>
<text x="480.72" y="1327" transform="rotate(-32 480.72 1327)" text-anchor="end" dominant-baseline="middle" font-family="Liberation Sans" font-size="20" fill="#676662">30-40</text>
<text x="546.04" y="1327" transform="rotate(-32 546.04 1327)" text-anchor="end" dominant-baseline="middle" font-family="Liberation Sans" font-size="20" fill="#676662">40-50</text>
<text x="611.36" y="1327" transform="rotate(-32 611.36 1327)" text-anchor="end" dominant-baseline="middle" font-family="Liberation Sans" font-size="20" fill="#676662">50-60</text>
<text x="676.68" y="1327" transform="rotate(-32 676.68 1327)" text-anchor="end" dominant-baseline="middle" font-family="Liberation Sans" font-size="20" fill="#676662">60-70</text>
<text x="742.00" y="1327" transform="rotate(-32 742.00 1327)" text-anchor="end" dominant-baseline="middle" font-family="Liberation Sans" font-size="20" fill="#676662">70-80</text>
<text x="807.32" y="1327" transform="rotate(-32 807.32 1327)" text-anchor="end" dominant-baseline="middle" font-family="Liberation Sans" font-size="20" fill="#676662">80-90</text>
<text x="872.64" y="1327" transform="rotate(-32 872.64 1327)" text-anchor="end" dominant-baseline="middle" font-family="Liberation Sans" font-size="20" fill="#676662">90-100</text>
<line x1="1034" y1="1285.80" x2="1614.8" y2="1285.80" stroke="#ECE9E1" stroke-width="1.5"/>
<line x1="1034" y1="1237.04" x2="1614.8" y2="1237.04" stroke="#ECE9E1" stroke-width="1.5"/>
<line x1="1034" y1="1188.28" x2="1614.8" y2="1188.28" stroke="#ECE9E1" stroke-width="1.5"/>
<line x1="1034" y1="1139.52" x2="1614.8" y2="1139.52" stroke="#ECE9E1" stroke-width="1.5"/>
<line x1="1034" y1="1090.76" x2="1614.8" y2="1090.76" stroke="#ECE9E1" stroke-width="1.5"/>
<line x1="1034" y1="1042.00" x2="1614.8" y2="1042.00" stroke="#ECE9E1" stroke-width="1.5"/>
<line x1="1050.00" y1="1042" x2="1050.00" y2="1301.5" stroke="#ECE9E1" stroke-width="1.5"/>
<line x1="1191.20" y1="1042" x2="1191.20" y2="1301.5" stroke="#ECE9E1" stroke-width="1.5"/>
<line x1="1332.40" y1="1042" x2="1332.40" y2="1301.5" stroke="#ECE9E1" stroke-width="1.5"/>
<line x1="1473.60" y1="1042" x2="1473.60" y2="1301.5" stroke="#ECE9E1" stroke-width="1.5"/>
<line x1="1614.80" y1="1042" x2="1614.80" y2="1301.5" stroke="#ECE9E1" stroke-width="1.5"/>
<line x1="1050" y1="1042" x2="1050" y2="1285.8" stroke="#D3D1CC" stroke-width="2"/>
<line x1="1050" y1="1285.8" x2="1614.8" y2="1285.8" stroke="#D3D1CC" stroke-width="2"/>
<text x="963.5" y="1163.8" transform="rotate(-90 963.5 1163.8)" text-anchor="middle" font-family="Liberation Sans" font-size="20" fill="#676662">Events</text>
<circle cx="1174" cy="1116.5" r="8.2" fill="rgba(225,74,78,0.45)" stroke="#E0474C" stroke-width="2"/>
<circle cx="1226" cy="1110" r="8.2" fill="rgba(225,74,78,0.45)" stroke="#E0474C" stroke-width="2"/>
<circle cx="1256.3" cy="1071" r="8.2" fill="rgba(225,74,78,0.45)" stroke="#E0474C" stroke-width="2"/>
<circle cx="1358" cy="1286" r="8.2" fill="rgba(225,74,78,0.45)" stroke="#E0474C" stroke-width="2"/>
<circle cx="1382.4" cy="1082" r="8.2" fill="rgba(184,116,25,0.4)" stroke="#B87419" stroke-width="2"/>
<circle cx="1452.8" cy="1098.4" r="8" fill="rgba(184,116,25,0.4)" stroke="#B87419" stroke-width="2"/>
<circle cx="1462" cy="1082.5" r="8" fill="rgba(184,116,25,0.4)" stroke="#B87419" stroke-width="2"/>
<circle cx="1480.5" cy="1093" r="16" fill="rgba(184,116,25,0.4)" stroke="#B87419" stroke-width="2"/>
<circle cx="1495.6" cy="1064.8" r="8.4" fill="rgba(184,116,25,0.4)" stroke="#B87419" stroke-width="2"/>
<circle cx="1354.6" cy="1086.5" r="23.8" fill="rgba(31,160,119,0.5)" stroke="#1E9E74" stroke-width="2"/>
<circle cx="1400" cy="1076.5" r="23.8" fill="rgba(31,160,119,0.5)" stroke="#1E9E74" stroke-width="2"/>
<circle cx="1407" cy="1080" r="14.8" fill="rgba(31,160,119,0.5)" stroke="#1E9E74" stroke-width="2"/>
<circle cx="1418" cy="1082" r="15.4" fill="rgba(31,160,119,0.5)" stroke="#1E9E74" stroke-width="2"/>
<circle cx="1420" cy="1109.5" r="24.5" fill="rgba(31,160,119,0.5)" stroke="#1E9E74" stroke-width="2"/>
<circle cx="1437.8" cy="1106" r="23.3" fill="rgba(31,160,119,0.5)" stroke="#1E9E74" stroke-width="2"/>
<circle cx="1467" cy="1084" r="15.4" fill="rgba(31,160,119,0.5)" stroke="#1E9E74" stroke-width="2"/>
<circle cx="1472.6" cy="1096.8" r="15.4" fill="rgba(31,160,119,0.5)" stroke="#1E9E74" stroke-width="2"/>
<circle cx="1487.7" cy="1097.6" r="23.8" fill="rgba(31,160,119,0.5)" stroke="#1E9E74" stroke-width="2"/>
<circle cx="1473.4" cy="1110" r="15" fill="rgba(31,160,119,0.5)" stroke="#1E9E74" stroke-width="2"/>
<circle cx="1542.3" cy="1088" r="8.4" fill="rgba(31,160,119,0.5)" stroke="#1E9E74" stroke-width="2"/>
</svg>
<div style="position:absolute;left:886px;top:1601px;width:70px;height:70px;border-radius:50%;background:#FBF7EC;box-shadow:0 6px 9px rgba(0,0,0,0.12), 0 0 0 1px #DDDEE2;"></div>
<svg style="position:absolute;left:0;top:0" width="1768" height="1716" viewBox="0 0 1768 1716"><path d="M921 1621.5 V1648.5 M910.5 1638 L921 1648.5 L931.5 1638" fill="none" stroke="#1E1D1B" stroke-width="2" stroke-linecap="round" stroke-linejoin="round"/></svg>
</body></html>
